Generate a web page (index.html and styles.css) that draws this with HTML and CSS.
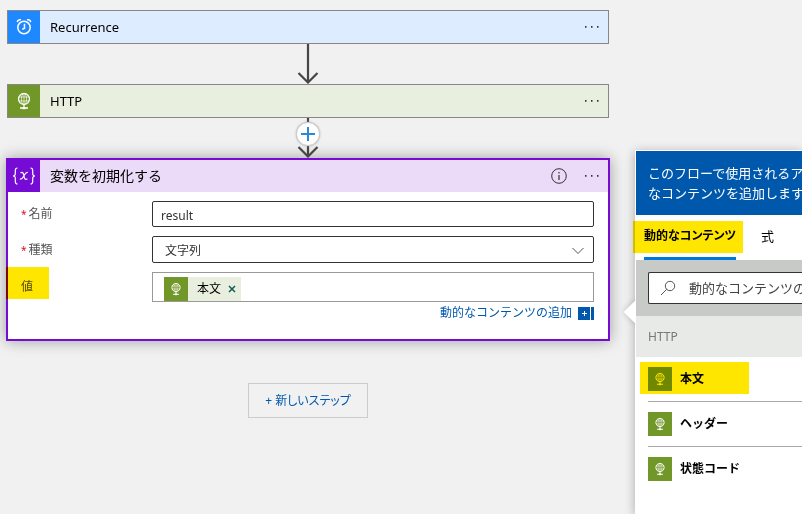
FILE: index.html
```html
<!DOCTYPE html>
<html lang="ja">
<head>
<meta charset="utf-8">
<title>フロー デザイナー</title>
<link rel="stylesheet" href="styles.css">
</head>
<body>
<svg class="defs" aria-hidden="true">
  <symbol id="globe" viewBox="0 0 16 18">
    <g fill="none" stroke="currentColor">
      <circle cx="8" cy="7" r="5.500" stroke-width="1.300"/>
      <ellipse cx="8" cy="7" rx="2.600" ry="5.500" stroke-width=".7"/>
      <path d="M2.800 5h10.400M2.800 9h10.400M8 1.400v11" stroke-width=".7"/>
      <path d="M8 12.500v3M4 16h8" stroke-width="1.300"/>
    </g>
    <path d="M6.500 15h3v2.200h-3z" fill="currentColor"/>
  </symbol>
  <symbol id="arrow" viewBox="0 0 22 40">
    <path d="M11 0v38M1.500 29l9.500 9.500 9.500-9.500" fill="none" stroke="currentColor" stroke-width="2.200"/>
  </symbol>
  <symbol id="dots" viewBox="0 0 16 4">
    <path d="M1 1h1.500v1.700H1zM7 1h1.500v1.700H7zM13 1h1.500v1.700H13z" fill="currentColor"/>
  </symbol>
</svg>
<main class="flow">
  <section class="step step-recurrence">
    <span class="step-icon">
      <svg width="16" height="18" viewBox="0 0 16 18" fill="none" stroke="currentColor" stroke-width="1.500"><circle cx="8" cy="9.500" r="6.200"/><path d="M8.500 5.800v4.400L6.300 11.400M1.300 4.200C1.500 2.400 3 1.200 5 1.800M14.700 4.200C14.500 2.400 13 1.200 11 1.800"/></svg>
    </span>
    <h2 class="step-title">Recurrence</h2>
    <button class="icon-button" aria-label="メニュー"><svg width="16" height="4"><use href="#dots"/></svg></button>
  </section>
  <div class="connector"><svg width="22" height="40"><use href="#arrow"/></svg></div>
  <section class="step step-http">
    <span class="step-icon"><svg width="16" height="18"><use href="#globe"/></svg></span>
    <h2 class="step-title">HTTP</h2>
    <button class="icon-button" aria-label="メニュー"><svg width="16" height="4"><use href="#dots"/></svg></button>
  </section>
  <div class="connector">
    <svg width="22" height="40"><use href="#arrow"/></svg>
    <button class="insert" aria-label="ステップの挿入"><svg width="14" height="14" viewBox="0 0 14 14"><path d="M7 0v14M0 7h14" stroke="currentColor" stroke-width="2"/></svg></button>
  </div>
  <section class="card">
    <header class="card-header">
      <span class="step-icon">
        <svg width="24" height="18" viewBox="0 0 24 18" fill="none" stroke="currentColor" stroke-width="1.200"><path d="M5.500 1C3.500 1 3.300 2 3.300 3.500v3C3.300 8 2.800 9 1 9c1.800 0 2.300 1 2.300 2.500v3c0 1.500.2 2.500 2.200 2.500M18.500 1c2 0 2.200 1 2.200 2.500v3C20.700 8 21.200 9 23 9c-1.800 0-2.300 1-2.300 2.500v3c0 1.500-.2 2.500-2.200 2.500M8.500 6c2-1.500 3 0 3.400 2.500.4 3 1.200 5 3.500 3.200M15.800 5.500c-2-.5-3.200 2-4 3.500-.8 1.600-2 3.500-4 3"/></svg>
      </span>
      <h2 class="step-title">変数を初期化する</h2>
      <button class="icon-button" aria-label="情報"><svg width="16" height="16" viewBox="0 0 16 16"><circle cx="8" cy="8" r="7.300" fill="none" stroke="currentColor"/><path d="M8 7v5M8 4v1.500" stroke="currentColor" stroke-width="1.200"/></svg></button>
      <button class="icon-button" aria-label="メニュー"><svg width="16" height="4"><use href="#dots"/></svg></button>
    </header>
    <form class="fields">
      <label for="name"><span class="required">*</span>名前</label>
      <input id="name" class="text-box" type="text" value="result">
      <label for="type"><span class="required">*</span>種類</label>
      <div class="select-wrap">
        <select id="type" class="text-box"><option>文字列</option></select>
        <svg class="chevron" width="12" height="8" viewBox="0 0 12 8"><path d="M.5 1L6 6.500 11.500 1" fill="none" stroke="currentColor"/></svg>
      </div>
      <span class="value-label">値</span>
      <div class="token-box">
        <span class="token">
          <span class="token-icon"><svg width="12" height="14"><use href="#globe"/></svg></span>
          <span>本文</span>
          <button type="button" class="remove" aria-label="削除"><svg width="8" height="8" viewBox="0 0 8 8"><path d="M1 1l6 6M7 1L1 7" stroke="currentColor" stroke-width="1.500"/></svg></button>
        </span>
      </div>
      <a class="add-content" href="#panel">動的なコンテンツの追加
        <svg width="16" height="13" viewBox="0 0 16 13"><path d="M0 0h12v13H0zM13 0h3v13h-3z" fill="currentColor"/><path d="M6.500 4v5M4 6.500h5" stroke="#fff"/></svg>
      </a>
    </form>
  </section>
  <button class="new-step">+ 新しいステップ</button>
</main>
<aside class="panel" id="panel">
  <span class="pointer"></span>
  <div class="panel-body">
    <p class="panel-title">このフローで使用されるア<br>なコンテンツを追加します</p>
    <nav class="tabs">
      <button class="tab tab-active">動的なコンテンツ</button>
      <button class="tab">式</button>
    </nav>
    <div class="search-area">
      <label class="search">
        <svg width="16" height="16" viewBox="0 0 16 16" fill="none" stroke="currentColor"><circle cx="10" cy="6" r="4.700"/><path d="M6.700 9.300L1 15"/></svg>
        <input type="text" aria-label="検索" placeholder="動的なコンテンツの">
      </label>
    </div>
    <h3 class="group">HTTP</h3>
    <ul class="items">
      <li><button class="item item-marked"><span class="token-icon"><svg width="12" height="14"><use href="#globe"/></svg></span>本文</button></li>
      <li><button class="item"><span class="token-icon"><svg width="12" height="14"><use href="#globe"/></svg></span>ヘッダー</button></li>
      <li><button class="item"><span class="token-icon"><svg width="12" height="14"><use href="#globe"/></svg></span>状態コード</button></li>
    </ul>
  </div>
</aside>
</body>
</html>
```
FILE: styles.css
```css
* { box-sizing: border-box; }

body {
  margin: 0;
  min-height: 100vh;
  display: flex;
  overflow: hidden;
  background: #f1f1f1;
  color: #000;
  font: 12px/16px "Noto Sans", "Noto Sans CJK JP", sans-serif;
}

button, input, select { font: inherit; color: inherit; }
button { border: 0; padding: 0; background: none; }
svg { display: block; flex: none; }
.defs { position: absolute; width: 0; height: 0; }

.flow {
  flex: 1;
  min-width: 0;
  padding: 10px 26px 0 7px;
  display: flex;
  flex-direction: column;
}

.step {
  display: flex;
  align-items: center;
  height: 34px;
  padding-right: 8px;
  border: 1px solid #8b8589;
}
.step-recurrence { background: #deecff; }
.step-http { background: #e8efdf; }
.step-icon {
  display: grid;
  place-items: center;
  align-self: stretch;
  width: 32px;
  color: #fff;
}
.step-recurrence .step-icon { background: #1e88ff; }
.step-http .step-icon { background: #709727; }
.step-title {
  flex: 1;
  margin: 0 0 0 10px;
  font-size: 13px;
  font-weight: 400;
}
.icon-button { color: #333; display: grid; }

.connector {
  position: relative;
  z-index: 1;
  display: grid;
  place-items: center;
  height: 40px;
  color: #484644;
}
.insert {
  position: absolute;
  top: 4px;
  display: grid;
  place-items: center;
  width: 24px;
  height: 24px;
  border: 1px solid #ccc;
  border-radius: 50%;
  background: #fff;
  color: #2b88d8;
  box-shadow: 0 0 2px #aaa;
}

.card {
  margin: 0 -1px;
  border: 2px solid #770bd6;
  background: #fff;
  box-shadow: 0 0 14px rgba(0, 0, 0, .35);
}
.card-header {
  display: flex;
  align-items: center;
  height: 32px;
  padding-right: 8px;
  background: #ebdaf8;
}
.card-header .step-icon { background: #770bd6; }
.card-header .step-title { font-size: 14px; }
.card-header .icon-button + .icon-button { margin-left: 17px; }

.fields {
  display: grid;
  grid-template-columns: 131px 1fr;
  grid-template-rows: 26px 27px 30px;
  row-gap: 9px;
  align-items: center;
  padding: 9px 14px 18px 13px;
  color: #555;
}
.required { color: #e00b1c; margin-right: 2px; font-size: 10px; }
.text-box {
  width: 100%;
  height: 100%;
  border: 1px solid #333;
  border-radius: 2px;
  padding: 2px 8px 0;
  background: #fff;
  color: #333;
}
input.text-box { height: 26px; }
.select-wrap { position: relative; height: 27px; }
select.text-box { appearance: none; padding: 2px 12px 0; }
.chevron { position: absolute; right: 10px; top: 11px; pointer-events: none; }
.value-label { position: relative; }
.value-label::after {
  content: "";
  position: absolute;
  left: -15px;
  top: -12px;
  width: 43px;
  height: 32px;
  background: #ffe600;
  mix-blend-mode: multiply;
}
.token-box {
  height: 30px;
  border: 1px solid #999;
  padding: 4px 11px 0;
}
.token {
  display: inline-flex;
  align-items: center;
  height: 24px;
  padding-right: 5px;
  background: #e8efdf;
  color: #000;
}
.token-icon {
  display: grid;
  place-items: center;
  width: 24px;
  height: 24px;
  background: #709727;
  color: #fff;
}
.token .token-icon { margin-right: 9px; }
.remove { margin-left: 7px; color: #14595a; }
.add-content {
  grid-column: 2;
  justify-self: end;
  display: flex;
  align-items: center;
  gap: 6px;
  margin-top: -6px;
  color: #0058ad;
  text-decoration: none;
}

.new-step {
  align-self: center;
  width: 120px;
  height: 35px;
  margin-top: 42px;
  border: 1px solid #ccc;
  color: #0058ad;
  font-size: 12px;
  font-feature-settings: "palt";
}

.panel {
  position: relative;
  width: 167px;
  margin-top: 150px;
  border: 1px solid #fff;
  border-right: 0;
  background: #fff;
  box-shadow: 0 2px 10px rgba(0, 0, 0, .3);
  white-space: nowrap;
}
.pointer {
  position: absolute;
  left: -9px;
  top: 153px;
  width: 16px;
  height: 16px;
  background: #fff;
  box-shadow: 0 0 6px rgba(0, 0, 0, .2);
  transform: rotate(45deg);
}
.panel-body { position: relative; }
.panel-title {
  margin: 0;
  padding: 12px 0 12px 12px;
  background: #0058ad;
  color: #fff;
  font-size: 13px;
  line-height: 20px;
}
.tabs {
  display: flex;
  gap: 25px;
  height: 45px;
  padding-left: 8px;
  background: #fff;
  font-size: 13px;
}
.tab { position: relative; border-bottom: 3px solid transparent; }
.tab-active {
  border-color: #0078d7;
  font-size: 12px;
  font-weight: 700;
  font-feature-settings: "palt";
}
.tab-active::after {
  content: "";
  position: absolute;
  inset: 6px -7px 4px -11px;
  background: #ffe600;
  mix-blend-mode: multiply;
}
.search-area { padding: 12px 0 12px 12px; background: #c8cac7; }
.search {
  display: flex;
  align-items: center;
  gap: 13px;
  height: 32px;
  padding-left: 11px;
  border: 1px solid #333;
  border-right: 0;
  border-radius: 2px 0 0 2px;
  background: #fff;
  color: #555;
}
.search input {
  flex: 1;
  min-width: 0;
  border: 0;
  padding: 0;
  background: none;
  font-size: 13px;
}
.search input::placeholder { color: #444; opacity: 1; }
.group {
  margin: 0;
  padding: 13px 12px 12px;
  background: #e8eae7;
  color: #777;
  font-size: 12px;
  font-weight: 400;
}
.items { margin: 0; padding: 0 0 0 12px; list-style: none; }
.items li + li { border-top: 1px solid #aaa; }
.item {
  position: relative;
  display: flex;
  align-items: center;
  gap: 8px;
  height: 44px;
  font-weight: 700;
}
.item-marked::after {
  content: "";
  position: absolute;
  left: -8px;
  top: 5px;
  width: 109px;
  height: 32px;
  background: #ffe600;
  mix-blend-mode: multiply;
}
```
